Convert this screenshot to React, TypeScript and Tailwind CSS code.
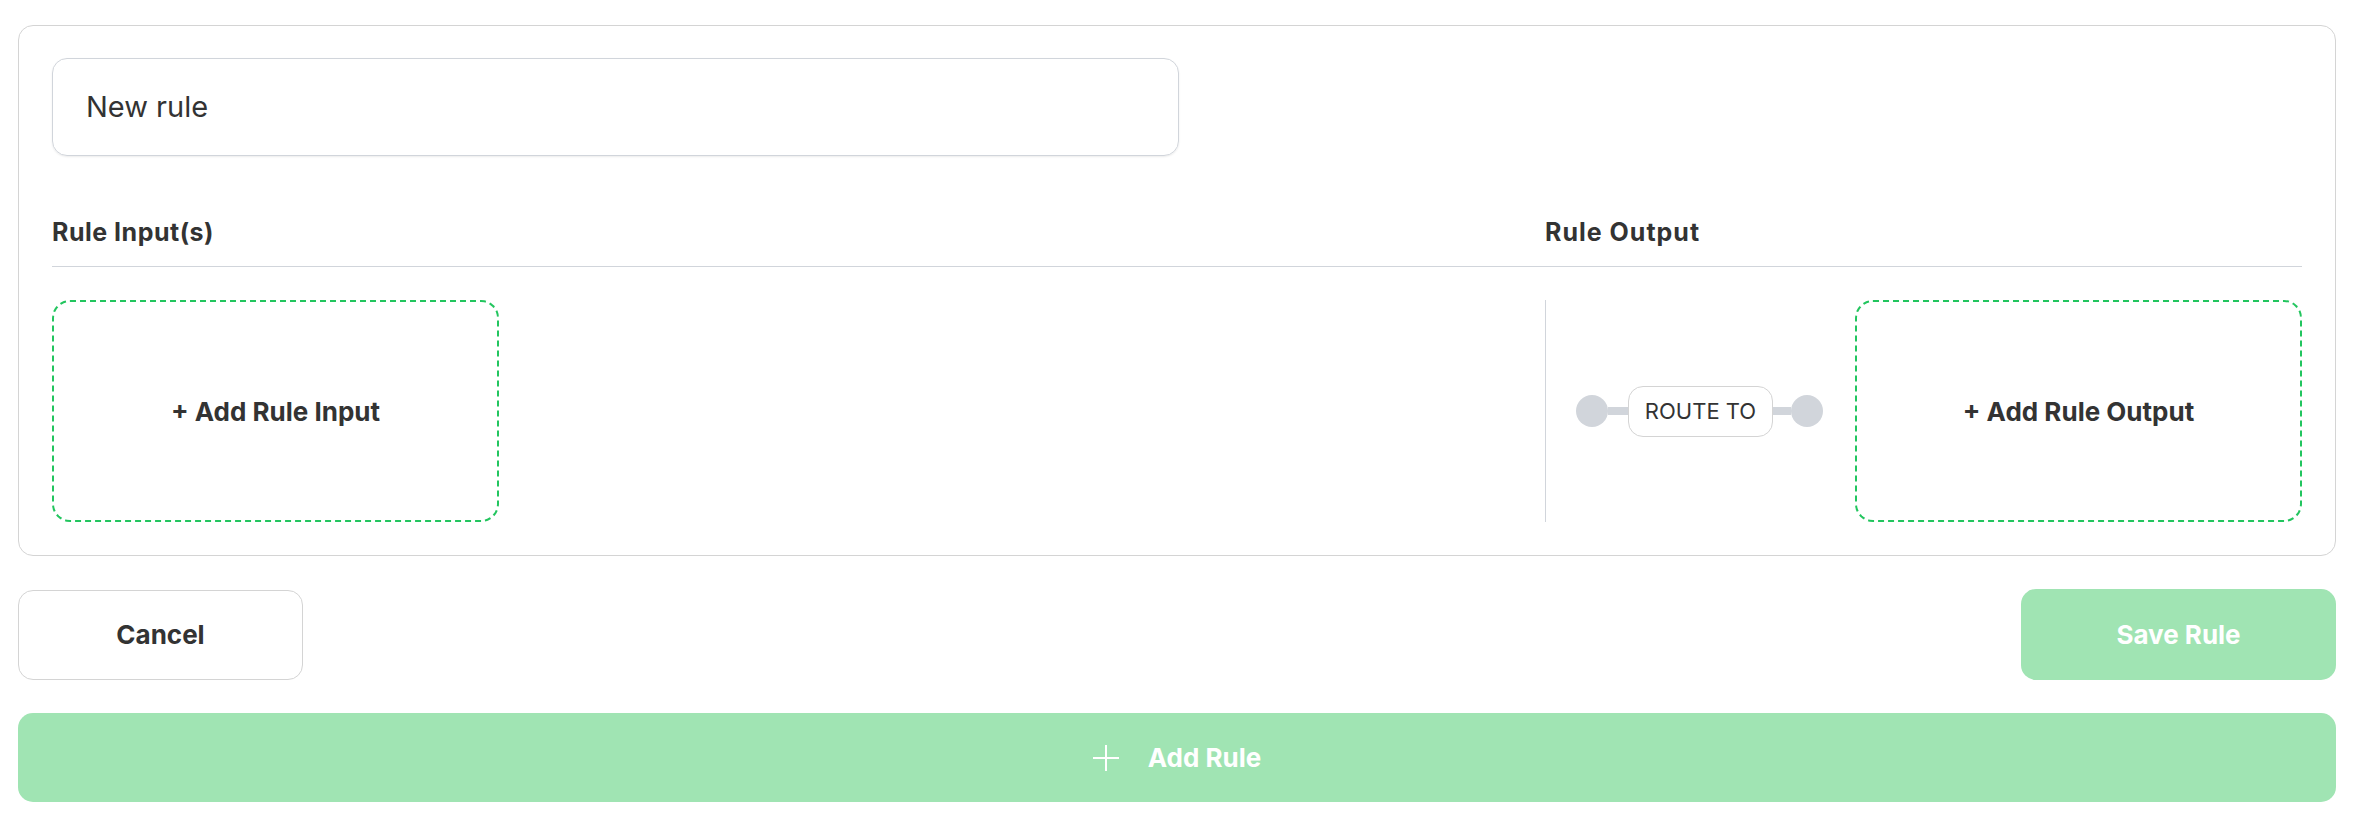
function DropZone({ label }: { label: string }) {
  return (
    <button className="flex h-[222px] w-[447px] shrink-0 items-center justify-center rounded-[18px] border-2 border-dashed border-[#22c55e] bg-white text-[26px] font-bold text-[#333]">
      {label}
    </button>
  );
}

function RouteConnector() {
  return (
    <div className="flex items-center">
      <div className="h-[32px] w-[32px] rounded-full bg-[#d1d5db]" />
      <div className="h-[8px] w-[20px] bg-[#d1d5db]" />
      <div className="flex h-[51px] w-[145px] items-center justify-center rounded-[15px] border-[1.5px] border-[#d4d4d4] bg-white text-[22px] text-[#333]">
        ROUTE TO
      </div>
      <div className="h-[8px] w-[18px] bg-[#d1d5db]" />
      <div className="h-[32px] w-[32px] rounded-full bg-[#d1d5db]" />
    </div>
  );
}

export default function App() {
  return (
    <div className="min-h-screen bg-white pl-[18px] pt-[25px] font-['Inter',sans-serif] text-[#333]">
      <div className="w-[2318px]">
        {/* Rule editor card */}
        <div className="rounded-[15px] border-[1.5px] border-[#d4d4d4] px-[33px] pb-[33px] pt-[32px]">
          <div className="flex h-[98px] w-[1127px] items-center rounded-[15px] border-[1.5px] border-[#d1d5db] px-[33px] text-[29px] shadow-[0_1px_2px_rgba(0,0,0,0.08)]">
            New rule
          </div>

          {/* Headers */}
          <div className="mt-[58px] flex border-b-[1.5px] border-[#d1d5db] pb-[16px] text-[25px] font-bold leading-[36px] tracking-[0.02em]">
            <div className="w-[1493px]">Rule Input(s)</div>
            <div className="tracking-[0.04em]">Rule Output</div>
          </div>

          {/* Inputs / outputs */}
          <div className="flex pt-[33px]">
            <div className="w-[1493px]">
              <DropZone label="+ Add Rule Input" />
            </div>
            <div className="flex flex-1 items-center border-l-[1.5px] border-[#d1d5db] pl-[30px]">
              <RouteConnector />
              <div className="ml-auto">
                <DropZone label="+ Add Rule Output" />
              </div>
            </div>
          </div>
        </div>

        {/* Actions */}
        <div className="mt-[33px] flex items-center justify-between">
          <button className="h-[90px] w-[285px] rounded-[15px] border-[1.5px] border-[#d4d4d4] bg-white text-[26px] font-bold text-[#333]">
            Cancel
          </button>
          <button className="h-[91px] w-[315px] rounded-[15px] bg-[#a0e4b3] text-[26px] font-bold text-white">
            Save Rule
          </button>
        </div>

        <button className="mt-[33px] flex h-[89px] w-full items-center justify-center gap-[29px] rounded-[15px] bg-[#a0e4b3] text-[26px] font-bold text-white">
          <svg width="26" height="26" viewBox="0 0 26 26" fill="none" stroke="currentColor" strokeWidth="2">
            <path d="M13 0v26M0 13h26" />
          </svg>
          Add Rule
        </button>
      </div>
    </div>
  );
}
